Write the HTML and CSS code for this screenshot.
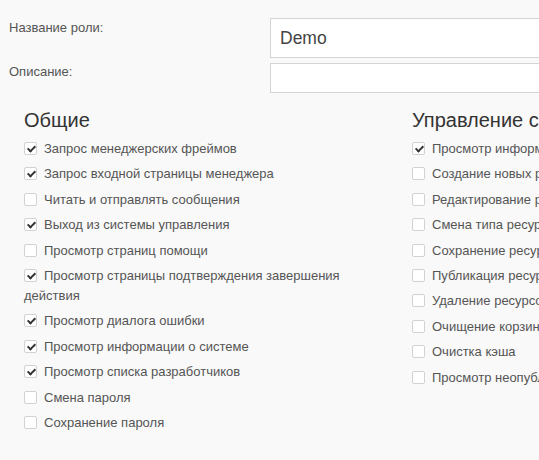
FILE: index.html
```html
<!DOCTYPE html>
<html lang="ru">
<head>
<meta charset="utf-8">
<link rel="stylesheet" href="styles.css">
</head>
<body>
<div class="page">
  <div class="field field-name">
    <label class="field-label">Название роли:</label>
    <div class="input input-lg">Demo</div>
  </div>
  <div class="field field-desc">
    <label class="field-label">Описание:</label>
    <div class="input input-sm"></div>
  </div>

  <div class="columns">
    <div class="col">
      <h2 class="col-title">Общие</h2>
      <ul class="perms">
        <li><span class="cb on"></span>Запрос менеджерских фреймов</li>
        <li><span class="cb on"></span>Запрос входной страницы менеджера</li>
        <li><span class="cb"></span>Читать и отправлять сообщения</li>
        <li><span class="cb on"></span>Выход из системы управления</li>
        <li><span class="cb"></span>Просмотр страниц помощи</li>
        <li><span class="cb on"></span>Просмотр страницы подтверждения завершения действия</li>
        <li><span class="cb on"></span>Просмотр диалога ошибки</li>
        <li><span class="cb on"></span>Просмотр информации о системе</li>
        <li><span class="cb on"></span>Просмотр списка разработчиков</li>
        <li><span class="cb"></span>Смена пароля</li>
        <li><span class="cb"></span>Сохранение пароля</li>
      </ul>
    </div>
    <div class="col">
      <h2 class="col-title">Управление содержимым</h2>
      <ul class="perms">
        <li><span class="cb on"></span>Просмотр информации о ресурсах</li>
        <li><span class="cb"></span>Создание новых ресурсов</li>
        <li><span class="cb"></span>Редактирование ресурсов</li>
        <li><span class="cb"></span>Смена типа ресурса</li>
        <li><span class="cb"></span>Сохранение ресурсов</li>
        <li><span class="cb"></span>Публикация ресурсов</li>
        <li><span class="cb"></span>Удаление ресурсов</li>
        <li><span class="cb"></span>Очищение корзины</li>
        <li><span class="cb"></span>Очистка кэша</li>
        <li><span class="cb"></span>Просмотр неопубликованных ресурсов</li>
      </ul>
    </div>
  </div>
</div>
</body>
</html>
```
FILE: styles.css
```css
html, body {
  margin: 0;
  padding: 0;
  background: #f9f9f9;
  overflow: hidden;
}
body {
  font-family: "Liberation Sans", Arial, sans-serif;
  color: #555;
}
.page {
  width: 820px;
  padding-top: 18px;
}
.field {
  display: flex;
  align-items: flex-start;
}
.field-desc {
  margin-top: 5px;
}
.field-label {
  width: 261px;
  padding-left: 9px;
  padding-top: 2px;
  font-size: 13px;
  line-height: 16px;
  color: #555;
}
.field-desc .field-label {
  padding-top: 1px;
}
.input {
  flex: 1;
  box-sizing: border-box;
  background: #fff;
  border: 1px solid #d4d4d4;
  color: #444;
}
.input-lg {
  height: 40px;
  padding-left: 9px;
  font-size: 17.5px;
  line-height: 38px;
}
.input-sm {
  height: 30px;
}
.columns {
  display: flex;
  padding-left: 24px;
  margin-top: 15px;
}
.col {
  width: 364px;
  padding-right: 24px;
}
.col-title {
  margin: 0 0 7px;
  font-size: 20px;
  font-weight: normal;
  line-height: 24px;
  color: #333;
  white-space: nowrap;
}
.perms {
  list-style: none;
  margin: 0;
  padding: 0;
}
.perms li {
  font-size: 13px;
  line-height: 20px;
  margin-bottom: 5.4px;
  color: #555;
}
.col + .col .perms li {
  white-space: nowrap;
}
.cb {
  display: inline-block;
  box-sizing: border-box;
  width: 13px;
  height: 13px;
  border: 1px solid #d2d2d2;
  border-radius: 2px;
  background: #fff;
  vertical-align: -2px;
  margin-right: 7px;
  position: relative;
}
.cb.on::after {
  content: "";
  position: absolute;
  left: 3.5px;
  top: 1px;
  width: 3px;
  height: 6px;
  border: solid #333;
  border-width: 0 2px 2px 0;
  transform: rotate(45deg);
}
```
